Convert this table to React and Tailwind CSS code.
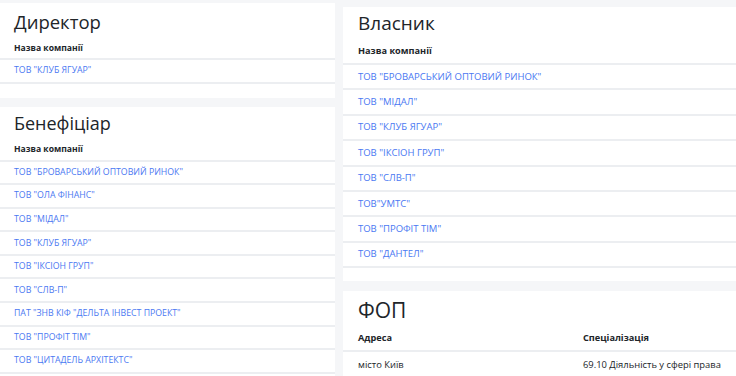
import React from "react";

const benef = [
  'ТОВ "БРОВАРСЬКИЙ ОПТОВИЙ РИНОК"',
  'ТОВ "ОЛА ФІНАНС"',
  'ТОВ "МІДАЛ"',
  'ТОВ "КЛУБ ЯГУАР"',
  'ТОВ "ІКСІОН ГРУП"',
  'ТОВ "СЛВ-П"',
  'ПАТ "ЗНВ КІФ "ДЕЛЬТА ІНВЕСТ ПРОЕКТ"',
  'ТОВ "ПРОФІТ ТІМ"',
  'ТОВ "ЦИТАДЕЛЬ АРХІТЕКТС"',
];

const owners = [
  'ТОВ "БРОВАРСЬКИЙ ОПТОВИЙ РИНОК"',
  'ТОВ "МІДАЛ"',
  'ТОВ "КЛУБ ЯГУАР"',
  'ТОВ "ІКСІОН ГРУП"',
  'ТОВ "СЛВ-П"',
  'ТОВ"УМТС"',
  'ТОВ "ПРОФІТ ТІМ"',
  'ТОВ "ДАНТЕЛ"',
];

const font = { fontFamily: '"Open Sans", "Noto Sans", sans-serif' };

export default function App() {
  return (
    <div className="w-[736px] h-[376px] overflow-hidden bg-[#f5f6f8] flex gap-[8px]" style={font}>
      {/* left column */}
      <div className="w-[335px] flex flex-col pt-[3px] gap-[9px]">
        <div className="bg-white pb-[14px]">
          <h2 className="h-[38px] px-[14px] pt-[5px] text-[18.5px] font-medium leading-[28px] text-[#212529]">Директор</h2>
          <div className="h-[19px] px-[14px] border-b-2 border-[#eceef1] text-[8.6px] font-bold text-[#212529] leading-[14px]">Назва компанії</div>
          <div className="h-[23.5px] px-[14px] border-b-2 border-[#eceef1] flex items-center text-[8.75px] text-[#4a78f2]">ТОВ "КЛУБ ЯГУАР"</div>
        </div>
        <div className="bg-white flex-1">
          <h2 className="h-[36px] px-[14px] pt-[2px] text-[18px] font-medium leading-[28px] text-[#212529]">Бенефіціар</h2>
          <div className="h-[19px] px-[14px] border-b-2 border-[#eceef1] text-[8.6px] font-bold text-[#212529] leading-[12px]">Назва компанії</div>
          {benef.map((b, i) => (
            <div key={i} className="h-[23.6px] px-[14px] border-b-2 border-[#eceef1] flex items-center text-[8.75px] text-[#4a78f2]">{b}</div>
          ))}
        </div>
      </div>
      {/* right column */}
      <div className="flex-1 flex flex-col pt-[7px] gap-[10px]">
        <div className="bg-white pb-[13px]">
          <h2 className="h-[34px] px-[15px] pt-[1px] text-[19px] font-medium leading-[30px] text-[#212529]">Власник</h2>
          <div className="h-[24px] px-[15px] border-b-2 border-[#eceef1] text-[9.2px] font-bold text-[#212529] leading-[20px]">Назва компанії</div>
          {owners.map((b, i) => (
            <div key={i} className="h-[25.4px] px-[15px] border-b-2 border-[#eceef1] flex items-center text-[9.5px] text-[#4a78f2]">{b}</div>
          ))}
        </div>
        <div className="bg-white flex-1">
          <h2 className="h-[38px] px-[15px] pt-[4px] text-[21px] font-medium leading-[30px] text-[#212529]">ФОП</h2>
          <div className="flex h-[23px] border-b-2 border-[#eceef1] text-[9.2px] font-bold text-[#212529] leading-[18px] whitespace-nowrap">
            <div className="w-[225px] px-[15px]">Адреса</div>
            <div className="px-[15px]">Спеціалізація</div>
          </div>
          <div className="flex h-[25px] items-center text-[9.4px] text-[#212529] whitespace-nowrap">
            <div className="w-[225px] px-[15px]">місто Київ</div>
            <div className="px-[15px]">69.10 Діяльність у сфері права</div>
          </div>
        </div>
      </div>
    </div>
  );
}
